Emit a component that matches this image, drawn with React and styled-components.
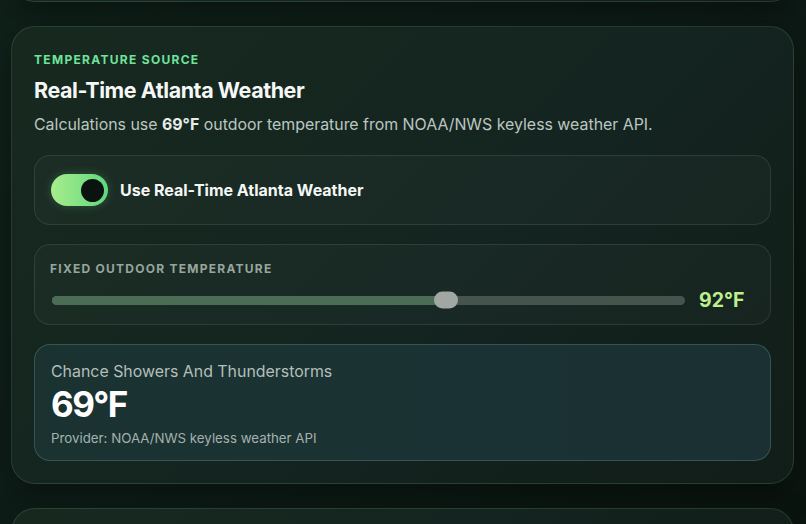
import React from "react";
import styled, { createGlobalStyle } from "styled-components";

const GlobalStyle = createGlobalStyle`
  html, body {
    margin: 0;
    padding: 0;
    background: #0d1913;
  }
  body {
    font-family: Inter, "Noto Sans", "Liberation Sans", sans-serif;
    -webkit-font-smoothing: antialiased;
  }
`;

const Page = styled.div`
  width: 806px;
  height: 524px;
  overflow: hidden;
  box-sizing: border-box;
  padding: 0 12px 0 11px;
  display: flex;
  flex-direction: column;
  gap: 24px;
  background: linear-gradient(135deg, #10211a 0%, #0e1c17 50%, #0b150f 100%);
`;

const Card = styled.section`
  flex-shrink: 0;
  box-sizing: border-box;
  border-radius: 24px;
  border: 1px solid rgba(150, 200, 160, 0.16);
  background: linear-gradient(135deg, #17291f 0%, #142420 55%, #111d18 100%);
  box-shadow: 0 10px 30px rgba(0, 0, 0, 0.35);
`;

const StubCard = styled(Card)`
  height: 60px;
  margin-top: -58px;
`;

const MainCard = styled(Card)`
  padding: 25px 22px 22px 22px;
  display: flex;
  flex-direction: column;
`;

const Eyebrow = styled.div`
  font-size: 12px;
  font-weight: 700;
  letter-spacing: 1.3px;
  color: #6fe39a;
  text-transform: uppercase;
  line-height: 16px;
`;

const Title = styled.h2`
  margin: 8px 0 0;
  font-size: 21.5px;
  font-weight: 700;
  letter-spacing: -0.45px;
  color: #f4f7f5;
  line-height: 28px;
`;

const Description = styled.p`
  margin: 10px 0 0;
  font-size: 15.9px;
  color: #bcc6c0;
  line-height: 22px;
  b {
    color: #e8ede9;
    font-weight: 700;
  }
`;

const Panel = styled.div`
  box-sizing: border-box;
  border-radius: 16px;
  border: 1px solid rgba(160, 200, 170, 0.14);
  background: rgba(255, 255, 255, 0.025);
  margin-top: ${(p) => p.$top || 20}px;
`;

const ToggleRow = styled(Panel)`
  height: 70px;
  padding: 0 16px;
  display: flex;
  align-items: center;
  gap: 12px;
`;

const Switch = styled.button`
  width: 57px;
  height: 32px;
  border: none;
  padding: 0 4px;
  border-radius: 999px;
  background: linear-gradient(90deg, #a7ee8c 0%, #62d67f 100%);
  display: flex;
  align-items: center;
  justify-content: ${(p) => (p.$on ? "flex-end" : "flex-start")};
  box-shadow: 0 0 10px rgba(110, 220, 130, 0.25);
`;

const Knob = styled.span`
  width: 23px;
  height: 23px;
  border-radius: 50%;
  background: #0b1310;
`;

const ToggleLabel = styled.span`
  font-size: 16px;
  font-weight: 700;
  color: #f4f7f5;
`;

const SliderPanel = styled(Panel)`
  height: 81px;
  padding: 16px 25px 0 15px;
`;

const FieldLabel = styled.div`
  font-size: 12px;
  font-weight: 700;
  letter-spacing: 1.25px;
  color: #97a69d;
  text-transform: uppercase;
  line-height: 16px;
`;

const SliderRow = styled.div`
  margin-top: 11px;
  display: flex;
  align-items: center;
  gap: 14px;
`;

const Track = styled.div`
  flex: 1;
  height: 9px;
  margin-left: 2px;
  border-radius: 999px;
  background: #46544e;
  position: relative;
`;

const Fill = styled.div`
  height: 100%;
  border-radius: 999px;
  background: #4b6d55;
`;

const Thumb = styled.div`
  position: absolute;
  top: 50%;
  width: 24px;
  height: 17px;
  border-radius: 9px;
  background: #a1a8a4;
  transform: translate(-50%, -50%);
`;

const SliderValue = styled.span`
  font-size: 19.5px;
  font-weight: 700;
  color: #bdf08c;
  min-width: 46px;
`;

const WeatherPanel = styled(Panel)`
  height: 117px;
  padding: 17px 16px 0 16px;
  background: linear-gradient(90deg, #1a3331 0%, #1b3234 60%, #1a3033 100%);
  border-color: rgba(110, 170, 170, 0.3);
`;

const Condition = styled.div`
  font-size: 15.9px;
  color: #b3bfbb;
  line-height: 20px;
`;

const BigTemp = styled.div`
  margin-top: 2px;
  font-size: 35px;
  font-weight: 700;
  letter-spacing: -1.6px;
  color: #ffffff;
  line-height: 40px;
`;

const Provider = styled.div`
  margin-top: 5px;
  font-size: 13.3px;
  color: #a4b1ad;
  line-height: 18px;
`;

const BottomCard = styled(Card)`
  height: 80px;
`;

export default function App() {
  const pct = 62.2;
  return (
    <>
      <GlobalStyle />
      <Page>
        <StubCard />
        <MainCard>
          <Eyebrow>Temperature Source</Eyebrow>
          <Title>Real-Time Atlanta Weather</Title>
          <Description>
            Calculations use <b>69°F</b> outdoor temperature from NOAA/NWS keyless weather API.
          </Description>
          <ToggleRow $top={19}>
            <Switch $on>
              <Knob />
            </Switch>
            <ToggleLabel>Use Real-Time Atlanta Weather</ToggleLabel>
          </ToggleRow>
          <SliderPanel $top={19}>
            <FieldLabel>Fixed Outdoor Temperature</FieldLabel>
            <SliderRow>
              <Track>
                <Fill style={{ width: `${pct}%` }} />
                <Thumb style={{ left: `${pct}%` }} />
              </Track>
              <SliderValue>92°F</SliderValue>
            </SliderRow>
          </SliderPanel>
          <WeatherPanel $top={19}>
            <Condition>Chance Showers And Thunderstorms</Condition>
            <BigTemp>69°F</BigTemp>
            <Provider>Provider: NOAA/NWS keyless weather API</Provider>
          </WeatherPanel>
        </MainCard>
        <BottomCard />
      </Page>
    </>
  );
}
